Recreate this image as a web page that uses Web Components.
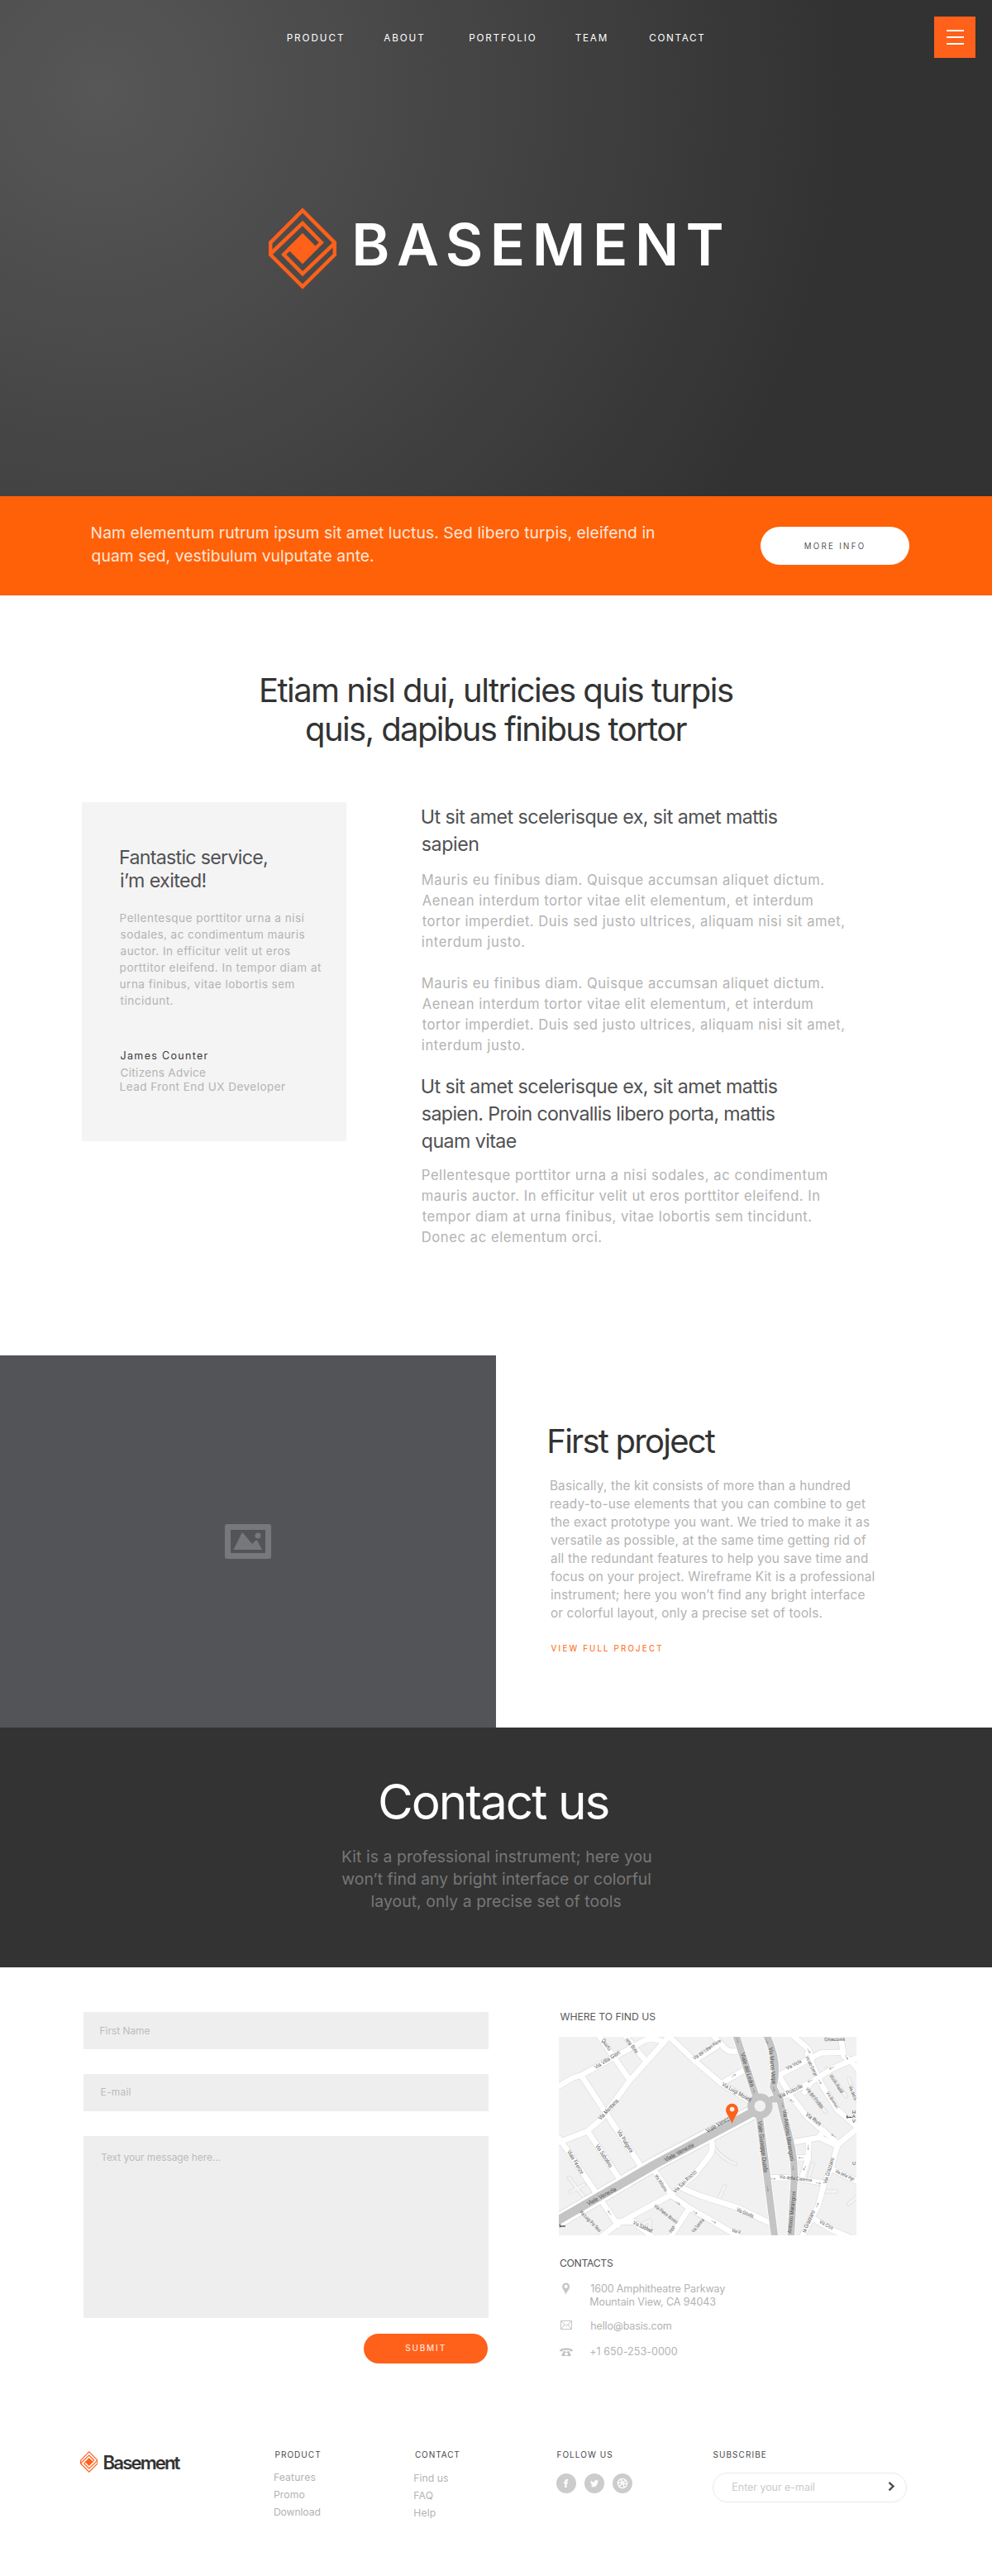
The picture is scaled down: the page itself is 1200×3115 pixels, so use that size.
<!DOCTYPE html>
<html lang="en">
<head>
<meta charset="utf-8">
<title>Basement</title>
<style>
body{margin:0;background:#fff;font-family:Inter,"Liberation Sans",sans-serif;color:#333}
</style>
</head>
<body>
<base-page></base-page>
<script>
const define=(name,html,base=HTMLElement)=>customElements.define(name,class extends base{
  constructor(){super();this.attachShadow({mode:'open'}).innerHTML=html;}
});

/* One line of text, tracked so that its ink spans exactly `w` pixels. */
const pen=document.createElement('canvas').getContext('2d');
customElements.define('type-line',class extends HTMLElement{
  constructor(){super();this.attachShadow({mode:'open'}).innerHTML='<style>:host{display:block;white-space:nowrap}</style><slot></slot>';}
  connectedCallback(){
    const c=getComputedStyle(this),t=this.textContent.trim();
    pen.font=`${c.fontWeight} ${c.fontSize} ${c.fontFamily}`;
    const m=pen.measureText(t),ink=m.actualBoundingBoxLeft+m.actualBoundingBoxRight;
    const nudge=parseFloat(c.fontSize)>16?0.6:0.2;
    this.style.marginLeft=(Number(this.getAttribute('x')||0)+m.actualBoundingBoxLeft+nudge)+'px';
    this.style.letterSpacing=((Number(this.getAttribute('w'))-ink)/(t.length-1))+'px';
  }
});

/* A stack of lines on a baseline grid: the box ends on the last baseline,
   `first` is the distance from the box top to the first baseline. */
customElements.define('type-block',class extends HTMLElement{
  constructor(){
    super();
    const a=(n,d)=>Number(this.getAttribute(n)||d);
    const s=a('size',14),L=a('lead',20),f=a('first',L),n=this.querySelectorAll('type-line').length;
    const A=Math.round(s*.96875),D=Math.round(s*.2412);
    const top=f-((L-A-D)/2+A);
    this.attachShadow({mode:'open'}).innerHTML=`<style>:host{display:flow-root;box-sizing:border-box;height:${f+(n-1)*L}px;font-size:${s}px;line-height:${L}px;font-weight:${a('weight',400)};color:${this.getAttribute('tone')||'inherit'}}
    div{margin-top:${top}px}</style><div><slot></slot></div>`;
  }
});

define('brand-mark',`<style>:host{display:block}svg{display:block;width:100%;height:100%}</style>
<svg viewBox="0 0 82 99" preserveAspectRatio="none" fill="none" stroke="#ff601a" stroke-width="4.5">
<path d="M2.200 42.300L41 3.400 79.800 42.300V57L41 95.600 2.200 57Z"/>
<path d="M2.200 56L41 18.900 63.800 42.300 55 51"/>
<path d="M79.800 43L41 80.100 18.200 56.700 27 48"/>
<path d="M41 30.700L59.600 49.400 41 68.300 22.200 49.500Z" fill="#ff601a" stroke="none"/>
</svg>`);

define('menu-button',`<style>:host{display:flex;flex-direction:column;align-items:center;justify-content:center;gap:6px;width:50px;height:50px;background:#ff601a}i{width:21px;height:2px;background:#fff}</style><i></i><i></i><i></i>`);

define('page-hero',`<style>
:host{display:flex;flex-direction:column;height:600px;color:#fff;background:radial-gradient(circle at 120px 110px,#575757,#323232 904px)}
header{display:flex;padding:20px 20px 0 347.500px;height:50px}
nav{display:grid;grid-template-columns:116.500px 104px 127.500px 89.500px 80px}
menu-button{margin-left:auto}
.brand{display:flex;margin:181px 0 0 324.700px}
brand-mark{width:82px;height:99px;margin-right:23px}
</style>
<header><nav>
<type-block size="11.7" first="30"><type-line w="67.300">PRODUCT</type-line></type-block>
<type-block size="11.7" first="30"><type-line w="48">ABOUT</type-line></type-block>
<type-block size="11.7" first="30"><type-line w="79.500">PORTFOLIO</type-line></type-block>
<type-block size="11.7" first="30"><type-line w="38">TEAM</type-line></type-block>
<type-block size="11.7" first="30"><type-line w="66">CONTACT</type-line></type-block>
</nav><menu-button></menu-button></header>
<div class="brand"><brand-mark></brand-mark><type-block size="70" lead="84" first="70" weight="600"><type-line w="443.300">BASEMENT</type-line></type-block></div>`);

define('pill-button',`<style>:host{display:flex;justify-content:center;box-sizing:border-box;border-radius:30px}</style><slot></slot>`);

define('promo-band',`<style>:host{display:flex;box-sizing:border-box;height:120px;padding:0 100px 0 110px;background:#ff6109;color:#ffe6d8;justify-content:space-between}
pill-button{width:180px;height:46px;margin-top:37px;background:#fff;color:#555}</style>
<type-block size="19.3" lead="28" first="51"><type-line w="680.500">Nam elementum rutrum ipsum sit amet luctus. Sed libero turpis, eleifend in</type-line><type-line w="341.500">quam sed, vestibulum vulputate ante.</type-line></type-block>
<pill-button><type-block size="9.7" first="27"><type-line w="72">MORE INFO</type-line></type-block></pill-button>`);

define('quote-card',`<style>:host{display:block;box-sizing:border-box;width:320px;height:410px;padding-left:46.400px;background:#f4f4f4}</style><slot></slot>`);

define('story-section',`<style>:host{display:block;height:919px}
.cols{display:flex;padding:74px 0 0 99px;gap:91.200px}</style>
<type-block size="40" lead="47" first="129" tone="#333"><type-line x="315.300" w="571">Etiam nisl dui, ultricies quis turpis</type-line><type-line x="370.400" w="460.600">quis, dapibus finibus tortor</type-line></type-block>
<div class="cols">
<quote-card>
<type-block size="23.2" lead="28" first="75" tone="#505154"><type-line w="177">Fantastic service,</type-line><type-line w="102.500">i’m exited!</type-line></type-block>
<type-block size="13.5" lead="20" first="42" tone="#b3b3b3"><type-line w="222">Pellentesque porttitor urna a nisi</type-line><type-line w="223">sodales, ac condimentum mauris</type-line><type-line w="205.500">auctor. In efficitur velit ut eros</type-line><type-line w="243.500">porttitor eleifend. In tempor diam at</type-line><type-line w="210">urna finibus, vitae lobortis sem</type-line><type-line w="63">tincidunt.</type-line></type-block>
<type-block size="12.500" lead="20" first="66" tone="#38393c"><type-line w="106">James Counter</type-line></type-block>
<type-block size="13.5" lead="17" first="21" tone="#b3b3b3"><type-line w="103.500">Citizens Advice</type-line><type-line w="199.500">Lead Front End UX Developer</type-line></type-block>
</quote-card>
<article>
<type-block size="23.2" lead="33" first="26" tone="#505154"><type-line w="430">Ut sit amet scelerisque ex, sit amet mattis</type-line><type-line w="67.500">sapien</type-line></type-block>
<type-block size="16.6" lead="25" first="41" tone="#b3b3b3"><type-line w="485.500">Mauris eu finibus diam. Quisque accumsan aliquet dictum.</type-line><type-line w="472.500">Aenean interdum tortor vitae elit elementum, et interdum</type-line><type-line w="510.500">tortor imperdiet. Duis sed justo ultrices, aliquam nisi sit amet,</type-line><type-line w="123.500">interdum justo.</type-line></type-block>
<type-block size="16.6" lead="25" first="50" tone="#b3b3b3"><type-line w="485.500">Mauris eu finibus diam. Quisque accumsan aliquet dictum.</type-line><type-line w="472.500">Aenean interdum tortor vitae elit elementum, et interdum</type-line><type-line w="510.500">tortor imperdiet. Duis sed justo ultrices, aliquam nisi sit amet,</type-line><type-line w="123.500">interdum justo.</type-line></type-block>
<type-block size="23.2" lead="33" first="52" tone="#505154"><type-line w="430">Ut sit amet scelerisque ex, sit amet mattis</type-line><type-line w="427">sapien. Proin convallis libero porta, mattis</type-line><type-line w="114">quam vitae</type-line></type-block>
<type-block size="16.6" lead="25" first="39" tone="#b3b3b3"><type-line w="490">Pellentesque porttitor urna a nisi sodales, ac condimentum</type-line><type-line w="480.500">mauris auctor. In efficitur velit ut eros porttitor eleifend. In</type-line><type-line w="470.500">tempor diam at urna finibus, vitae lobortis sem tincidunt.</type-line><type-line w="216.500">Donec ac elementum orci.</type-line></type-block>
</article></div>`);

define('project-feature',`<style>:host{display:flex;height:450px}
figure{margin:0;width:600px;background:#535458;display:flex;align-items:center;justify-content:center}
svg{width:56px;height:42px}
.copy{padding-left:63.300px}</style>
<figure><svg viewBox="0 0 56 42" fill="#77787b"><path fill-rule="evenodd" d="M3 0H53Q56 0 56 3V39Q56 42 53 42H3Q0 42 0 39V3Q0 0 3 0ZM7 7V35H49V7Z"/><path d="M10.500 31L20 11.500Q21.200 9.500 22.500 11.500L33 24 37 20Q38.200 19 39.500 20.500L45 31Z"/><circle cx="40" cy="14" r="3.500"/></svg></figure>
<div class="copy">
<type-block size="40" lead="47" first="118" tone="#333"><type-line x="0.400" w="201.500">First project</type-line></type-block>
<type-block size="15.3" lead="22" first="45" tone="#b3b3b3">
<type-line x="2.400" w="362.500">Basically, the kit consists of more than a hundred</type-line><type-line x="2.400" w="381">ready-to-use elements that you can combine to get</type-line><type-line x="2.400" w="386">the exact prototype you want. We tried to make it as</type-line><type-line x="2.400" w="382">versatile as possible, at the same time getting rid of</type-line><type-line x="2.400" w="384">all the redundant features to help you save time and</type-line><type-line x="2.400" w="391.500">focus on your project. Wireframe Kit is a professional</type-line><type-line x="2.400" w="380.500">instrument; here you won’t find any bright interface</type-line><type-line x="2.400" w="328.500">or colorful layout, only a precise set of tools.</type-line></type-block>
<type-block size="9.7" lead="20" first="41" weight="500" tone="#ff7a33"><type-line x="3" w="133.700">VIEW FULL PROJECT</type-line></type-block>
</div>`);

define('contact-banner',`<style>:host{display:block;height:290px;background:#333}</style>
<type-block size="58.500" lead="70" first="111" tone="#fff"><type-line x="459.300" w="275.700">Contact us</type-line></type-block>
<type-block size="19.3" lead="27" first="52" tone="#777"><type-line x="413.300" w="373.300">Kit is a professional instrument; here you</type-line><type-line x="412.700" w="374">won’t find any bright interface or colorful</type-line><type-line x="449" w="302">layout, only a precise set of tools</type-line></type-block>`);

define('form-field',`<style>:host{display:block;width:490px;height:45px;background:#eee;color:#bcbcbc}</style><slot></slot>`);

/* Street map; road geometry is in map units, three to a pixel. */
const roads={
  20:['M48 308L100 277 130 268 350 147Q385 125 430 150','M450 125L305 288 205 425 150 472 48 512','M130 270L350 605','M190 120L305 285','M280 115L362 215','M155 475L275 655','M48 495L180 690 262 812','M445 125L540 215 640 300 752 368','M540 215L620 165','M600 115L650 170Q670 190 700 178','M640 297L720 250','M395 615L455 700','M600 500Q612 530 595 560L540 630 450 705 265 805 195 860','M450 700L530 755 610 800 710 860','M495 678L560 705 700 750 815 805','M265 800L320 800 400 865','M515 760L450 860','M850 350L960 295 1040 245 1130 205','M848 268L950 213 1000 187 1080 185','M895 122L955 175 965 215','M960 295L940 330','M950 190L1000 300 1060 395 1130 455','M850 275L890 345 950 420 1060 515','M1135 458L1060 520 1035 610 1010 665 990 740 930 855','M1070 125L1082 200Q1110 215 1135 250','M815 640L900 640 1010 660','M905 510L990 495 1010 470','M955 505L953 570 930 640','M905 568L950 568','M1040 610L1135 655','M965 785L1040 830 1100 855','M995 495L1060 525'],
  10:['M85 640L130 700 150 715','M90 692L140 665','M610 530Q650 580 690 590','M650 670L625 725','M945 315L1015 400','M1020 245L1090 345','M1100 280L1135 370','M1020 690L1055 690','M970 590L955 640','M1100 735L1135 705','M345 810L380 795 375 840']
};
const road=(w,c,extra)=>roads[w].map(d=>`<path d="${d}" stroke="${c}" stroke-width="${+w+extra}"/>`).join('');
const names=[['Via Villa Glori',182,247,272,190,20],['Quarto',202,142,228,180,20],['nino Bixio',288,140,328,190,20],['Via Mentana',200,432,265,363,21],['Via Podgora',258,473,307,550,21],['Via Sabotino',180,525,232,604,21],['Viale Firenze',77,546,128,628,21],['Viale Venezia',155,742,258,686,22],['Viale Venezia',436,583,540,526,22],['Viale Venezia',588,478,680,424,22],['Via Luigi Moretti',638,305,742,366,21],['Via dei Liberi Fiore',540,213,638,146,18],['Viale del Ledra',707,190,744,312,22],['Via Marco Volpe',810,168,822,302,22],['Viale Giuseppe Duodo',770,436,792,622,22],['Via Antonio Marangoni',860,396,888,580,22],['Antonio Marangoni',892,842,908,690,21],['Via Poscolle',850,353,935,312,21],['Via Viola',877,250,930,222,18],['Vicolo Gorgo',943,202,978,272,17],['Vicolo Raddi',1030,270,1072,335,17],['Via del Freddo',943,318,1000,390,18],['Via Bremari',1018,332,1055,390,17],['Via Rivis',942,414,994,453,21],['Via della Cisterna',848,642,965,655,18],['Via Grazzano',1020,662,1048,570,20],['ia Grazzano',943,840,978,762,20],['Via della Vign',1050,620,1118,652,18],['Via Cisis',992,803,1040,830,18],['Via Gisella',692,760,752,786,19],['Via San Rocco',470,697,550,621,20],['Via Volturno',396,632,434,692,17],['Via Pietro Bonini',392,745,474,808,18],['Via Luigi Pio Tess',122,765,194,838,18],['Via Sabbad',316,808,384,840,20],['Via Somma',538,840,576,795,18],['Joppi',455,842,470,818,17],['Via V',675,836,706,844,18],['Ghiacciaia',1012,145,1086,143,18],['Via del S',1100,308,1120,360,17]];
const label=([t,x,y,x2,y2,s])=>`<text transform="translate(${x} ${y}) rotate(${Math.atan2(y2-y,x2-x)*180/Math.PI})" font-size="${s}" textLength="${Math.hypot(x2-x,y2-y)}" lengthAdjust="spacingAndGlyphs">${t}</text>`;
const arrows=[[682,270,-30],[755,323,72],[803,145,72],[696,142,72],[828,318,75],[860,376,80],[806,680,83],[898,604,88],[895,362,215],[1045,488,215],[1038,242,155],[960,289,155],[1092,203,60],[955,180,60],[995,292,60],[953,530,90],[940,605,120],[927,568,180],[825,644,0],[990,660,8],[986,740,-65],[480,732,35],[542,766,30],[610,800,28],[232,768,235]];

define('street-map',`<style>:host{display:block;width:360px;height:240px}svg{display:block;width:100%;height:100%}text{font-family:"Liberation Sans",sans-serif;fill:#4c4c4c}</style>
<svg viewBox="48 129 1080 720" fill="none" stroke-linecap="round" stroke-linejoin="round"><rect x="48" y="129" width="1080" height="720" fill="#f1f1f1"/>
${road(10,'#dedede',5)}${road(10,'#f4f4f4',0)}${road(20,'#dedede',4)}
<path d="M48 795L400 588 780 388" stroke="#dedede" stroke-width="56"/>
${road(20,'#fff',0)}
<path d="M48 795L400 588 780 388" stroke="#fff" stroke-width="50"/>
<g stroke="#fff" stroke-width="30"><path d="M690 120L765 350M800 120Q850 220 826 310L845 352M775 410L832 860M822 355L850 355C868 450 902 520 903 630L890 860"/></g>
<g stroke="#c4c4c4" stroke-width="25"><path d="M690 120L765 350M800 120Q850 220 826 310L845 352M775 410L832 860M822 355L850 355C868 450 902 520 903 630L890 860"/><path d="M40 798L400 590 760 398" stroke-width="32"/></g>
<circle cx="778" cy="380" r="33" fill="#f1f1f1" stroke="#c4c4c4" stroke-width="25"/>
<g stroke="#888" stroke-width="1.500">${arrows.map(([x,y,r])=>`<path transform="translate(${x} ${y}) rotate(${r})" d="M-8 0H8M4 -3L8 0 4 3"/>`).join('')}</g>
${names.map(label).join('')}
<path d="M52 816H70M52 810V818M1094 421H1110M1094 415V423" stroke="#555" stroke-width="4"/><text x="1112" y="407" font-size="18">H</text><text x="1112" y="424" font-size="18">A</text><text x="1112" y="441" font-size="18">V</text><text x="1113" y="594" font-size="17">U</text>
<path fill="#ff601a" fill-rule="evenodd" d="M677 444C668 420 654 408 654 394A22.500 22.500 0 0 1 699 394C699 408 685 420 677 444ZM677 383A8 8 0 1 0 677 400 8 8 0 1 0 677 383Z"/>
</svg>`);

define('contact-area',`<style>:host{display:flex;box-sizing:border-box;height:561px;padding:54px 0 0 101px;gap:85px}
form{display:flex;flex-direction:column;width:490px;gap:30px;margin:0}
pill-button{width:150px;height:36px;background:#ff601a;color:#ffe4d8;margin:-11px 1px 0 auto}
.where{width:360px}street-map{margin-top:20px}
.row{display:flex}.row svg{flex:none;width:16px;overflow:visible}.row type-block{margin-left:22.100px}
.row:nth-of-type(1) svg{margin-top:18px}</style>
<form><form-field><type-block size="11.9" first="27.300"><type-line x="20.300" w="60">First Name</type-line></type-block></form-field>
<form-field><type-block size="11.9" first="26.300"><type-line x="21.400" w="35">E-mail</type-line></type-block></form-field>
<form-field style="height:220px"><type-block size="11.9" first="30"><type-line x="21" w="144.600">Text your message here...</type-line></type-block></form-field>
<pill-button><type-block size="10" first="21" weight="500"><type-line w="48.500">SUBMIT</type-line></type-block></pill-button></form>
<div class="where"><type-block size="12.2" first="10" tone="#58595c"><type-line x="1.300" w="115.700">WHERE TO FIND US</type-line></type-block>
<street-map></street-map>
<type-block size="12.2" first="38" tone="#505154"><type-line x="0.700" w="65">CONTACTS</type-line></type-block>
<div class="row"><svg height="17" viewBox="0 0 16 17"><path fill="#c6c6c6" fill-rule="evenodd" d="M8.600 16C7.800 12 4.100 9.800 4.100 6A4.500 4.500 0 0 1 13.100 6C13.100 9.800 9.400 12 8.600 16ZM8.600 3.800A2.100 2.100 0 1 0 8.600 8 2.100 2.100 0 1 0 8.600 3.800Z"/></svg><type-block size="12.500" lead="16" first="31" tone="#b3b3b3"><type-line w="163">1600 Amphitheatre Parkway</type-line><type-line w="151">Mountain View, CA 94043</type-line></type-block></div>
<div class="row"><svg height="30" viewBox="0 0 16 30" fill="none" stroke="#c4c4c4"><path d="M2.500 18.500H15.500V28.500H2.500ZM3 19L9 24.500 15 19M3 28L7 23M15 28L11 23"/></svg><type-block size="12.500" first="29" tone="#b3b3b3"><type-line w="97.500">hello@basis.com</type-line></type-block></div>
<div class="row"><svg height="32" viewBox="0 0 16 32"><path fill="#c1c1c1" fill-rule="evenodd" d="M1 24.800C1 20.500 17 20.500 17 24.800 16.500 25.500 13.500 25.500 13.300 25V23.800H4.700V25C4.500 25.500 1.500 25.500 1 24.800ZM6 24.800H7.300V25.800H10.700V24.800H12L14.500 29.500V31H3.500V29.500ZM9 26.500A2 2 0 1 0 9 30.500 2 2 0 1 0 9 26.500Z"/></svg><type-block size="12.500" first="30" tone="#b3b3b3"><type-line w="105.500">+1 650-253-0000</type-line></type-block></div>
</div>`);

define('social-links',`<style>:host{display:flex;gap:10px}svg{width:24px;height:24px}</style>
<svg viewBox="0 0 24 24"><circle cx="12" cy="12" r="12" fill="#ccc"/><path fill="#fff" d="M10.300 17V12.300H9V10.300H10.300V9Q10.300 7 12.500 7H14V9H13Q12.500 9 12.500 9.600V10.300H14L13.700 12.300H12.500V17Z"/></svg>
<svg viewBox="0 0 24 24"><circle cx="12" cy="12" r="12" fill="#ccc"/><path fill="#fff" d="M17 9.100 16 10.300C16 14 13.500 16.500 10.300 16.500 9.100 16.500 8 16.100 7.200 15.600 8.400 15.700 9.400 15.300 10.200 14.700 9.200 14.600 8.600 14 8.300 13.200H9.200C8.100 12.900 7.500 12 7.500 11L8.400 11.200C7.500 10.500 7.200 9.400 7.800 8.400 8.900 9.700 10.300 10.500 12 10.600 11.700 8.900 12.800 7.900 14 7.900 14.600 7.900 15.200 8.100 15.600 8.500L16.800 8 16 9.200Z"/></svg>
<svg viewBox="0 0 24 24"><circle cx="12" cy="12" r="12" fill="#ccc"/><g fill="none" stroke="#fff" stroke-width="1.300"><circle cx="12" cy="12" r="5.600"/><path d="M9.700 7Q13.500 11.500 14 17M6.500 11.500Q13 11.800 15.800 8M8 16Q11 11 17.500 12.700"/></g></svg>`);

define('subscribe-box',`<style>:host{display:flex;box-sizing:border-box;width:235px;height:36px;border:1px solid #e9e9e9;border-radius:18px}svg{width:9px;height:13px;margin:9px 12.500px 0 auto}</style>
<type-block size="12.500" first="21" tone="#cbcbcb"><type-line x="23.300" w="99.500">Enter your e-mail</type-line></type-block>
<svg viewBox="0 0 9 13" fill="none" stroke="#505154" stroke-width="2.500"><path d="M1.500 1.800L6.500 6.600 1.500 11.400"/></svg>`);

define('page-footer',`<style>:host{display:grid;grid-template-columns:235px 169.400px 172.200px 188.600px 1fr;height:175px;padding-left:96.700px;box-sizing:border-box}
.brand{display:flex;padding-top:24px}brand-mark{width:21.500px;height:26px;margin-right:6.800px}</style>
<div class="brand"><brand-mark></brand-mark><type-block size="22.200" lead="26" first="22" weight="600" tone="#333"><type-line w="93">Basement</type-line></type-block></div>
<div><type-block size="10" first="32" tone="#48494c"><type-line x="0.600" w="54.700">PRODUCT</type-line></type-block><type-block size="12.200" lead="21" first="28" tone="#b3b3b3"><type-line w="49.500">Features</type-line><type-line w="36.500">Promo</type-line><type-line w="55.500">Download</type-line></type-block></div>
<div><type-block size="10" first="32" tone="#48494c"><type-line x="0.600" w="53.500">CONTACT</type-line></type-block><type-block size="12.200" lead="21" first="29" tone="#b3b3b3"><type-line w="40.700">Find us</type-line><type-line w="22.500">FAQ</type-line><type-line w="25.500">Help</type-line></type-block></div>
<div><type-block size="10" first="32" tone="#48494c"><type-line w="66.700">FOLLOW US</type-line></type-block><social-links style="margin-top:19px;margin-left:-.3px"></social-links></div>
<div><type-block size="10" first="32" tone="#48494c"><type-line x="0.400" w="64.400">SUBSCRIBE</type-line></type-block><subscribe-box style="margin-top:18px"></subscribe-box></div>`);

define('base-page',`<style>:host{display:block;width:1200px}</style>
<page-hero></page-hero><promo-band></promo-band><story-section></story-section><project-feature></project-feature><contact-banner></contact-banner><contact-area></contact-area><page-footer></page-footer>`);
</script>
</body>
</html>
